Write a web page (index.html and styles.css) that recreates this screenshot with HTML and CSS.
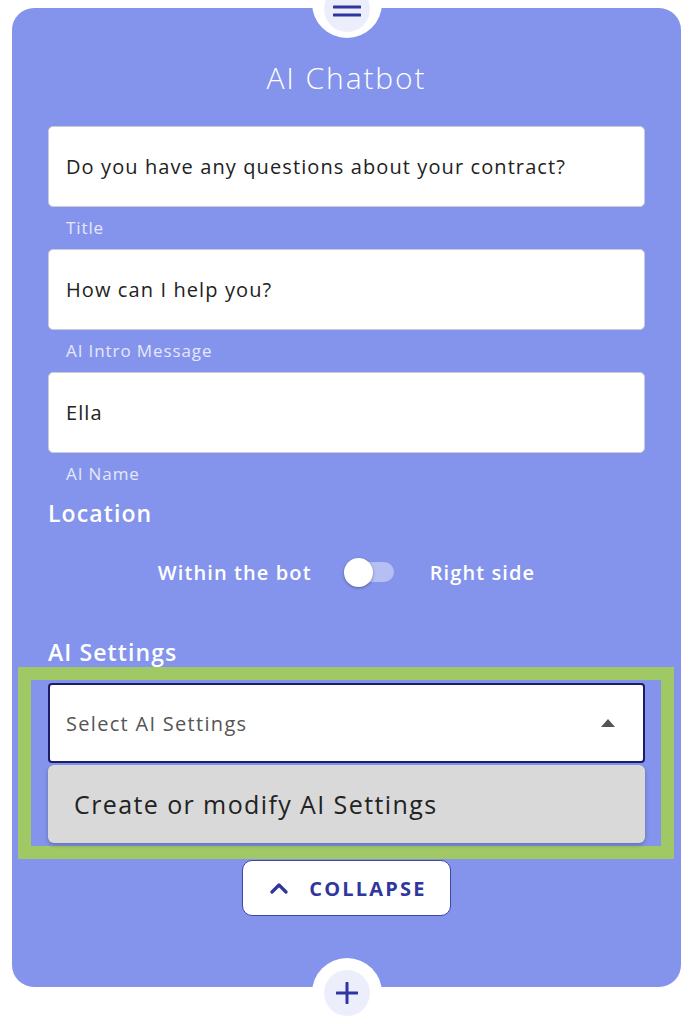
FILE: index.html
```html
<!DOCTYPE html>
<html>
<head>
<meta charset="utf-8">
<link rel="stylesheet" href="styles.css">
</head>
<body>
<div class="card">
  <div class="knob knob-top">
    <div class="knob-inner">
      <svg width="28" height="12" viewBox="0 0 28 12"><path d="M1 2h26M1 10h26" stroke="#2f36a0" stroke-width="3" stroke-linecap="round"/></svg>
    </div>
  </div>
  <h1 class="title">AI Chatbot</h1>
  <div class="field">
    <div class="input">Do you have any questions about your contract?</div>
    <div class="label">Title</div>
  </div>
  <div class="field">
    <div class="input">How can I help you?</div>
    <div class="label">AI Intro Message</div>
  </div>
  <div class="field">
    <div class="input">Ella</div>
    <div class="label">AI Name</div>
  </div>
  <h2 class="section loc">Location</h2>
  <div class="toggle-row">
    <span class="opt">Within the bot</span>
    <span class="switch"><span class="track"></span><span class="thumb"></span></span>
    <span class="opt">Right side</span>
  </div>
  <h2 class="section ais">AI Settings</h2>
  <div class="highlight">
    <div class="select">
      <span>Select AI Settings</span>
      <svg width="14" height="8" viewBox="0 0 14 8"><path d="M0 8L7 0L14 8Z" fill="#555"/></svg>
    </div>
    <div class="menu">Create or modify AI Settings</div>
  </div>
  <div class="btn-row">
    <div class="collapse">
      <svg width="18" height="12" viewBox="0 0 18 12"><path d="M2 10L9 3L16 10" fill="none" stroke="#2f36a0" stroke-width="3.2" stroke-linecap="round" stroke-linejoin="round"/></svg>
      <span>COLLAPSE</span>
    </div>
  </div>
  <div class="knob knob-bottom">
    <div class="knob-inner">
      <svg width="22" height="22" viewBox="0 0 22 22"><path d="M11 1v20M1 11h20" stroke="#2f36a0" stroke-width="3" stroke-linecap="round"/></svg>
    </div>
  </div>
</div>
</body>
</html>
```
FILE: styles.css
```css
* { box-sizing: border-box; }
html, body { margin: 0; padding: 0; background: #fff; height: 1024px; overflow: hidden; }
body { font-family: "Open Sans", "Noto Sans", sans-serif; }
.card {
  position: relative;
  margin: 8px 9px 0 12px;
  width: 669px;
  height: 979px;
  background: #8494ec;
  border-radius: 22px;
  padding: 53px 36px 0 36px;
  display: flex;
  flex-direction: column;
}
.knob {
  position: absolute;
  left: 50%;
  width: 70px;
  height: 70px;
  margin-left: -35px;
  border-radius: 50%;
  background: #fff;
  display: flex;
  align-items: center;
  justify-content: center;
}
.knob-top { top: -40px; }
.knob-bottom { top: 950px; }
.knob-inner {
  width: 46px;
  height: 46px;
  border-radius: 50%;
  background: #eceefc;
  display: flex;
  align-items: center;
  justify-content: center;
}
.knob-top .knob-inner { margin-top: 12px; align-items: flex-end; padding-bottom: 15px; }
.title {
  margin: 0 0 31px;
  text-align: center;
  color: #fff;
  font-weight: 300;
  font-size: 30px;
  line-height: 34px;
  letter-spacing: 1.9px;
}
.field { display: flex; flex-direction: column; }
.input {
  height: 81px;
  background: #fff;
  border: 1px solid #c9cbd6;
  border-radius: 5px;
  padding: 0 17px;
  display: flex;
  align-items: center;
  font-size: 20px;
  letter-spacing: 1.1px;
  color: #222;
}
.label {
  margin: 11px 0 11px 18px;
  line-height: 20px;
  font-size: 17px;
  letter-spacing: 0.9px;
  color: #e4e8fb;
}
.section {
  margin: 0;
  color: #fff;
  font-size: 23px;
  line-height: 28px;
  font-weight: 600;
  letter-spacing: 1.1px;
}
.loc { margin-top: 4px; }
.toggle-row {
  margin-top: 30px;
  height: 30px;
  display: flex;
  align-items: center;
  justify-content: center;
  color: #fff;
  font-size: 20px;
  font-weight: 600;
  letter-spacing: 1.1px;
}
.switch {
  position: relative;
  width: 50px;
  height: 30px;
  margin: 0 36px 0 32px;
  display: block;
}
.track {
  position: absolute;
  left: 4px;
  right: 0;
  top: 5px;
  height: 20px;
  border-radius: 10px;
  background: rgba(255,255,255,0.4);
}
.thumb {
  position: absolute;
  left: 0;
  top: 1px;
  width: 29px;
  height: 29px;
  border-radius: 50%;
  background: #fff;
  box-shadow: 0 1px 3px rgba(0,0,0,0.35);
}
.ais { margin-top: 51px; }
.highlight {
  margin: 1px -29px 0 -30px;
  border: 13px solid #a0c865;
  padding: 3px 16px 3px 17px;
}
.select {
  height: 80px;
  background: #fff;
  border: 2px solid #1b1d6b;
  border-radius: 4px;
  padding: 0 28px 0 16px;
  display: flex;
  align-items: center;
  justify-content: space-between;
  color: #555;
  font-size: 20px;
  letter-spacing: 1.3px;
}
.menu {
  margin-top: 2px;
  height: 78px;
  background: #d9d9d9;
  border-radius: 6px;
  box-shadow: 0 2px 4px rgba(0,0,0,0.25);
  display: flex;
  align-items: center;
  padding-left: 26px;
  font-size: 25px;
  letter-spacing: 1.4px;
  color: #222;
}
.btn-row { display: flex; justify-content: center; margin-top: 1px; }
.collapse {
  width: 209px;
  height: 56px;
  background: #fff;
  border: 1.5px solid #3d45a8;
  border-radius: 10px;
  display: flex;
  align-items: center;
  justify-content: center;
  gap: 21px;
  padding-left: 4px;
  color: #2f36a0;
  font-weight: 700;
  font-size: 20px;
  letter-spacing: 2.2px;
}
```
